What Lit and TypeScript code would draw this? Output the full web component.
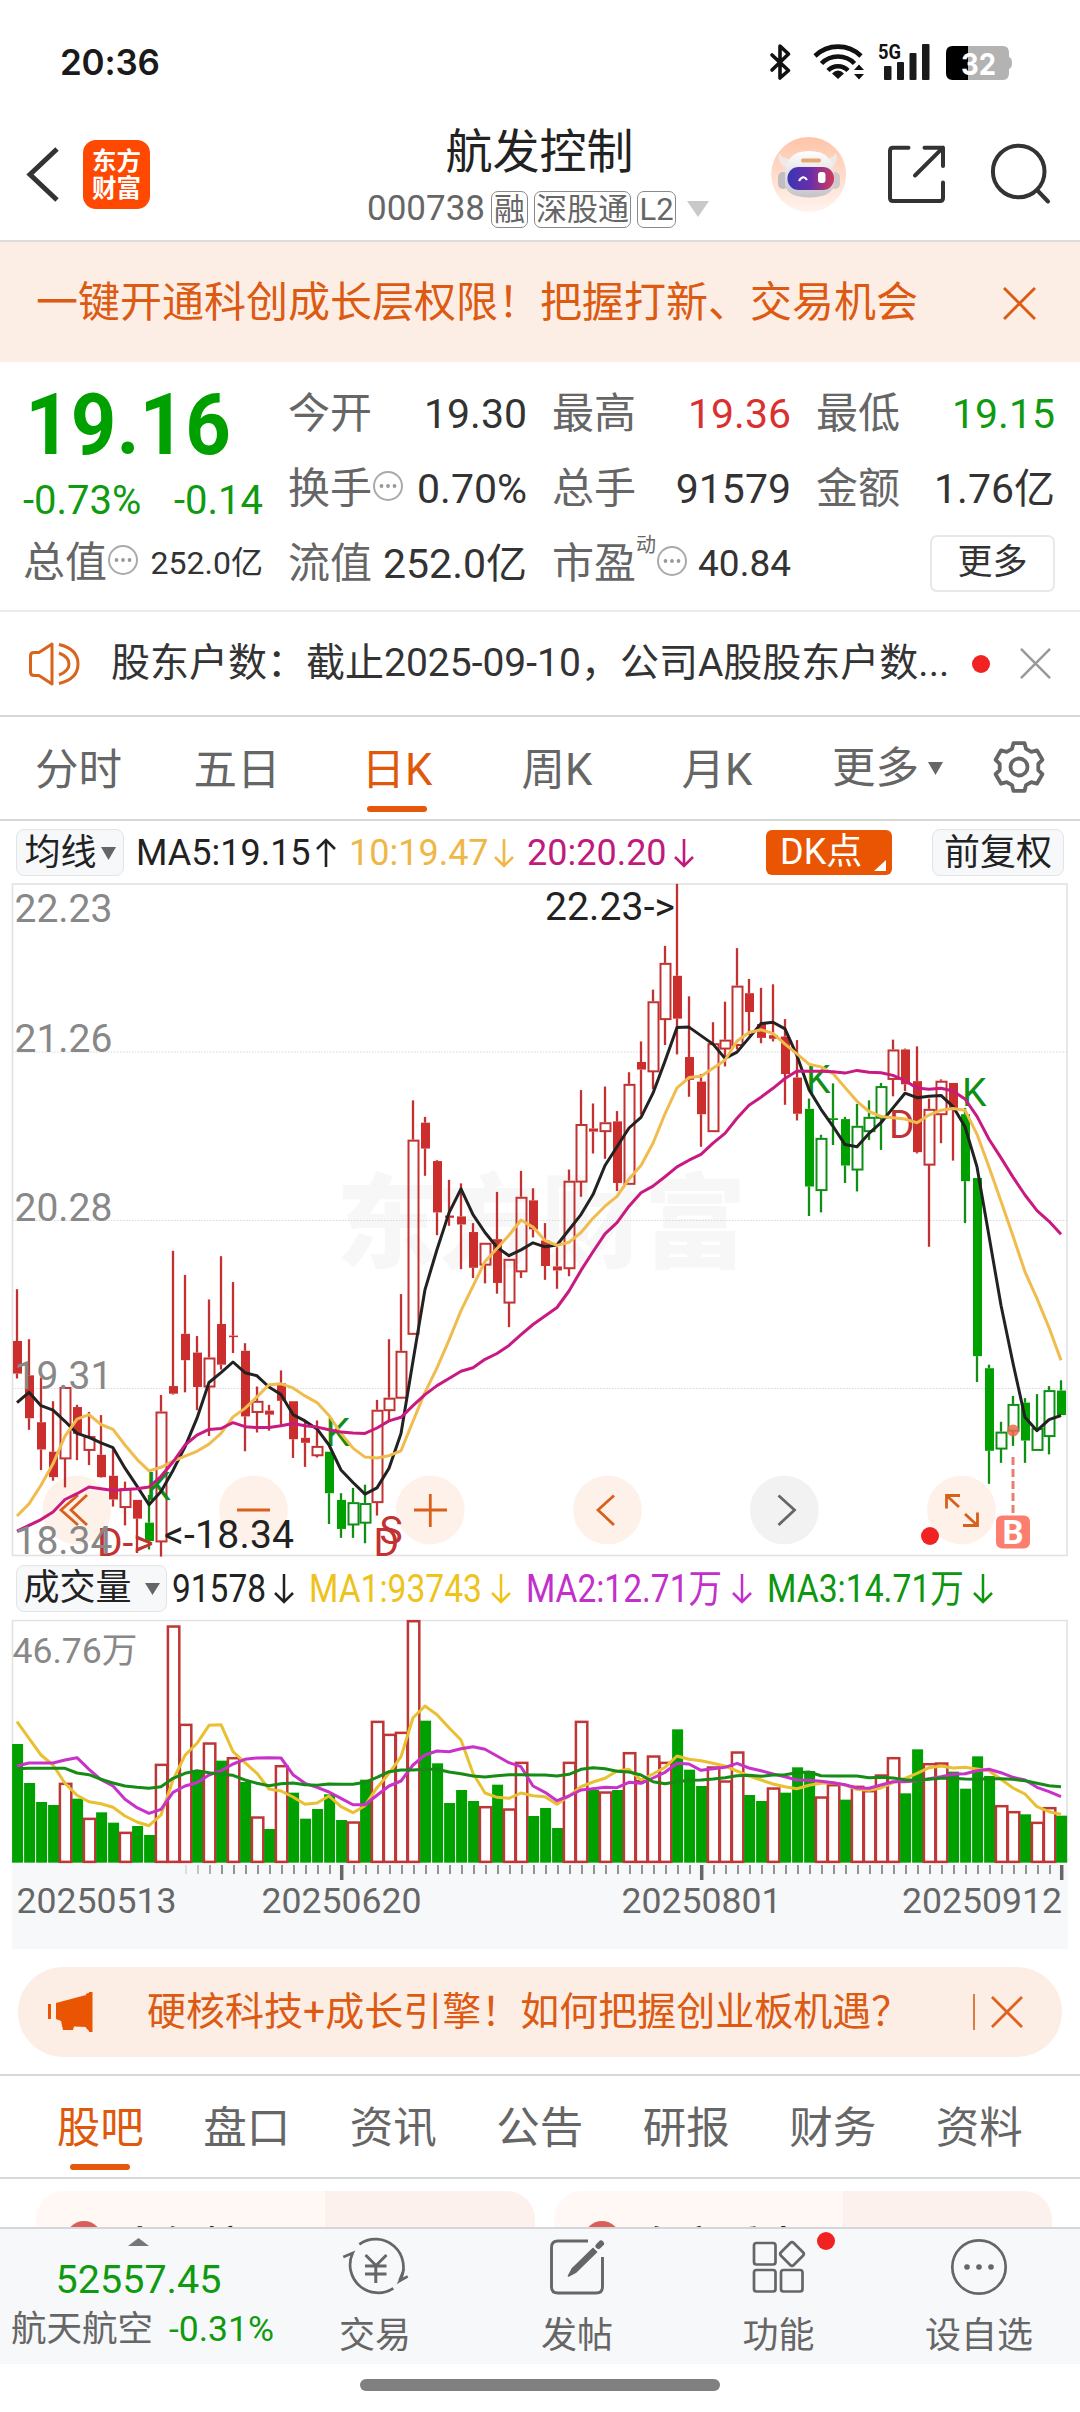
import { LitElement, html, svg, css, nothing } from "lit";
import { customElement } from "lit/decorators.js";

const UP = "#c23232";
const UP_FILL = "#cc2d2d";
const DOWN = "#00a000";
const DOWN_LINE = "#0f8f16";
const STEP = 12;
const FIRST_X = 17;

/* kind, body top, body bottom, high, low */
type Candle = [string, number, number, number, number];
const candles: Candle[] = [
  ["R", 1055, 1128, 939, 1139], ["R", 1132, 1228, 1051, 1254], ["R", 1237, 1298, 1137, 1344], ["R", 1303, 1360, 1190, 1368],
  ["r", 1158, 1318, 1158, 1383], ["R", 1203, 1263, 1198, 1322], ["r", 1268, 1299, 1214, 1333], ["R", 1310, 1360, 1221, 1361],
  ["R", 1357, 1410, 1298, 1426], ["r", 1385, 1427, 1370, 1468], ["R", 1411, 1453, 1411, 1530], ["G", 1462, 1503, 1400, 1522],
  ["r", 1213, 1504, 1176, 1538], ["R", 1156, 1173, 853, 1175], ["R", 1039, 1098, 907, 1170], ["R", 1081, 1158, 1044, 1210],
  ["r", 1092, 1157, 962, 1268], ["R", 1017, 1108, 865, 1119], ["R", 1043, 1046, 923, 1082], ["R", 1077, 1224, 1060, 1302],
  ["r", 1189, 1214, 1157, 1260], ["R", 1211, 1220, 1198, 1256], ["R", 1150, 1189, 1121, 1243], ["R", 1190, 1275, 1190, 1317],
  ["R", 1272, 1283, 1236, 1337], ["r", 1290, 1311, 1233, 1316], ["G", 1303, 1396, 1303, 1465], ["G", 1411, 1476, 1396, 1496],
  ["g", 1416, 1466, 1384, 1496], ["g", 1418, 1462, 1377, 1508], ["r", 1209, 1416, 1187, 1446], ["r", 1182, 1210, 1051, 1232],
  ["r", 1077, 1182, 950, 1182], ["r", 604, 1039, 516, 1039], ["R", 566, 624, 553, 685], ["R", 652, 767, 650, 818],
  ["R", 774, 779, 694, 797], ["R", 776, 794, 702, 894], ["R", 811, 891, 791, 914], ["r", 835, 884, 835, 926],
  ["R", 827, 925, 721, 949], ["r", 871, 969, 871, 1024], ["r", 732, 899, 674, 914], ["R", 740, 805, 713, 823],
  ["R", 830, 887, 791, 918], ["R", 888, 897, 845, 938], ["r", 696, 892, 671, 910], ["r", 569, 698, 493, 732],
  ["R", 579, 586, 523, 635], ["r", 565, 585, 485, 647], ["R", 563, 701, 540, 719], ["r", 479, 703, 453, 703],
  ["R", 430, 447, 384, 548], ["r", 294, 451, 268, 491], ["r", 208, 334, 170, 392], ["R", 237, 333, 31, 413],
  ["R", 419, 470, 283, 508], ["R", 474, 547, 457, 620], ["r", 388, 585, 341, 585], ["r", 380, 400, 295, 440],
  ["r", 259, 392, 175, 402], ["R", 276, 318, 244, 370], ["R", 345, 376, 264, 388], ["R", 370, 378, 256, 384],
  ["R", 373, 457, 334, 526], ["R", 465, 546, 381, 561], ["G", 535, 709, 512, 775], ["g", 600, 717, 593, 767],
  ["G", 556, 560, 478, 616], ["G", 558, 662, 553, 701], ["g", 573, 671, 524, 720], ["g", 553, 585, 516, 605],
  ["g", 484, 555, 477, 627], ["r", 402, 468, 380, 507], ["R", 402, 480, 400, 495], ["R", 473, 632, 395, 635],
  ["r", 535, 660, 512, 844], ["r", 472, 547, 469, 612], ["R", 477, 535, 477, 651], ["G", 547, 697, 533, 791],
  ["G", 690, 1089, 690, 1147], ["G", 1116, 1301, 1108, 1375], ["g", 1258, 1296, 1236, 1328], ["g", 1196, 1256, 1178, 1290],
  ["G", 1193, 1278, 1183, 1328], ["g", 1250, 1299, 1174, 1299], ["g", 1165, 1268, 1156, 1309], ["G", 1166, 1221, 1143, 1221],
];

const ma5 = [1193, 1170, 1200, 1210, 1235, 1262, 1271, 1283, 1294, 1340, 1380, 1422, 1392, 1345, 1292, 1228, 1148, 1126, 1102, 1126, 1133, 1158, 1175, 1220, 1234, 1252, 1288, 1344, 1372, 1398, 1384, 1340, 1262, 1100, 940, 850, 768, 714, 772, 812, 845, 864, 851, 835, 844, 840, 806, 772, 727, 662, 620, 578, 554, 500, 428, 353, 352, 371, 390, 422, 408, 376, 344, 341, 356, 416, 492, 536, 574, 615, 620, 590, 566, 533, 500, 510, 507, 505, 530, 575, 665, 820, 975, 1105, 1226, 1256, 1231, 1222];
const ma10 = [1447, 1420, 1378, 1330, 1268, 1230, 1220, 1242, 1253, 1288, 1320, 1346, 1338, 1324, 1313, 1302, 1286, 1262, 1225, 1206, 1180, 1153, 1151, 1160, 1178, 1193, 1222, 1262, 1295, 1315, 1317, 1312, 1301, 1235, 1170, 1115, 1053, 987, 932, 877, 848, 818, 784, 800, 830, 841, 834, 812, 780, 753, 731, 692, 662, 612, 546, 488, 465, 462, 444, 426, 383, 364, 358, 366, 390, 412, 435, 441, 456, 487, 518, 541, 552, 555, 558, 566, 549, 538, 534, 538, 592, 665, 742, 820, 900, 960, 1025, 1098];
const ma20 = [1481, 1468, 1455, 1438, 1410, 1397, 1382, 1386, 1390, 1388, 1386, 1382, 1358, 1326, 1288, 1266, 1253, 1251, 1238, 1247, 1249, 1249, 1245, 1240, 1245, 1248, 1254, 1259, 1261, 1262, 1250, 1234, 1226, 1200, 1175, 1155, 1139, 1123, 1115, 1096, 1083, 1065, 1041, 1018, 999, 980, 943, 897, 855, 815, 790, 753, 723, 708, 687, 665, 650, 637, 612, 590, 556, 527, 509, 489, 467, 450, 451, 451, 452, 455, 449, 453, 454, 460, 472, 488, 491, 489, 495, 513, 552, 603, 645, 688, 728, 763, 787, 816];

const volumes: [string, number][] = (
  "G552 G669 G726 G735 r668 G716 r773 G757 G788 r815 G798 G825 r611 r196 r491 G630 r547 G602 r591 G666 r769 G807 " +
  "r615 G698 G776 G747 G703 G780 r784 G659 r482 r521 r515 r180 G482 G610 G729 G690 G723 r738 G674 r745 r605 G768 " +
  "G744 G804 r605 r482 G690 r694 G690 r576 r660 r586 r605 G508 G629 G678 r619 r661 r574 G705 G723 r682 G698 G622 " +
  "G633 r709 r672 G719 r677 r690 r643 r591 G700 G568 r609 r607 G635 G686 G589 G648 r735 r753 G763 r785 r741 G767"
).split(" ").map((s) => [s[0], Number(s.slice(1))] as [string, number]);

const vma1 = [485, 535, 585, 615, 670, 706, 725, 731, 742, 768, 786, 797, 765, 660, 586, 550, 496, 494, 575, 608, 640, 687, 693, 711, 733, 729, 708, 740, 758, 737, 683, 640, 590, 473, 438, 464, 503, 540, 640, 699, 712, 715, 699, 707, 710, 733, 708, 680, 666, 655, 633, 628, 660, 642, 622, 588, 598, 602, 610, 618, 633, 648, 660, 672, 680, 686, 676, 670, 668, 675, 688, 691, 684, 668, 655, 640, 623, 618, 624, 622, 627, 632, 658, 684, 702, 740, 755, 763];
const vma2 = [618, 609, 609, 609, 600, 593, 628, 659, 678, 718, 743, 760, 748, 697, 678, 668, 645, 632, 612, 598, 594, 593, 594, 644, 670, 682, 696, 715, 734, 734, 706, 678, 663, 615, 585, 573, 575, 566, 560, 568, 588, 608, 620, 678, 697, 722, 708, 690, 686, 682, 683, 667, 670, 654, 637, 610, 612, 631, 626, 622, 610, 624, 632, 642, 650, 660, 661, 664, 668, 674, 684, 685, 675, 665, 665, 662, 656, 650, 643, 641, 632, 628, 638, 652, 660, 682, 695, 710];
const vma3 = [626, 625, 625, 625, 625, 639, 644, 658, 669, 678, 682, 685, 680, 655, 640, 632, 638, 643, 646, 660, 670, 677, 671, 669, 674, 676, 672, 673, 673, 667, 652, 635, 630, 630, 628, 628, 636, 641, 648, 651, 647, 644, 644, 645, 645, 648, 643, 628, 623, 626, 634, 636, 645, 665, 671, 665, 661, 660, 657, 653, 647, 646, 649, 645, 644, 638, 636, 647, 648, 648, 648, 653, 652, 654, 659, 661, 658, 655, 655, 657, 658, 656, 656, 658, 662, 670, 677, 680];

const xAt = (i: number) => FIRST_X + i * STEP;
const priceY = (v: number) => 870 + v / 2.24;
const volY = (v: number) => 1560 + v / 3;
const points = (list: number[], y: (v: number) => number) =>
  list.map((v, i) => `${xAt(i)},${y(v).toFixed(1)}`).join(" ");

@customElement("candle-chart")
class CandleChart extends LitElement {
  static styles = css`
    :host { display: block; }
    svg { display: block; }
    .t { font: 39px Roboto, sans-serif; }
    .axis { fill: #888; }
    .mark { font: 900 102px "Noto Sans CJK SC", sans-serif; fill: #f7f7f7; }
    .line { fill: none; stroke-width: 3; stroke-linejoin: round; }
  `;

  private candle([kind, top, bottom, high, low]: Candle, i: number) {
    const x = xAt(i);
    const red = kind.toLowerCase() === "r";
    const line = red ? UP : DOWN_LINE;
    const t = priceY(top), b = priceY(bottom), h = priceY(high), l = priceY(low);
    const filled = kind === "R" || kind === "G";
    return svg`
      ${h < t ? svg`<path d="M${x} ${h}V${t}" stroke=${line} stroke-width="2.3"/>` : nothing}
      ${l > b ? svg`<path d="M${x} ${b}V${l}" stroke=${line} stroke-width="2.3"/>` : nothing}
      ${filled
        ? svg`<rect x=${x - 4} y=${t} width="9" height=${Math.max(b - t, 1.5)} fill=${red ? UP_FILL : DOWN}/>`
        : svg`<rect x=${x - 4.5} y=${t + 1} width="10" height=${Math.max(b - t - 1, 1)} fill="none" stroke=${line} stroke-width="2"/>`}`;
  }

  render() {
    return html`<svg width="1080" height="674" viewBox="0 883 1080 674">
      <text class="mark" x="336" y="1260" textLength="410">东方财富</text>
      ${[1052, 1220.5, 1388.5].map((y) => svg`<path d="M12 ${y}H1067" stroke="#d8d8d8" stroke-dasharray="1.5 1.5"/>`)}
      <rect x="12.5" y="884" width="1054.5" height="671.5" fill="none" stroke="#e2e2e4" stroke-width="1.6"/>
      <g fill="#fef1ea">
        ${[76.7, 253.5, 430.3, 607.5, 961.5].map((x) => svg`<circle cx=${x} cy="1510" r="34.4"/>`)}
        <circle cx="784.3" cy="1510" r="34.4" fill="#f2f2f2"/>
      </g>
      <g fill="none" stroke="#d9601a" stroke-width="2.8">
        <path d="M78 1495L61 1510L78 1525M87 1495L71 1510L87 1525"/>
        <path d="M237 1510H270M414 1510H447M430.3 1494V1527"/>
        <path d="M614 1495.500L598 1510L614 1525"/>
        <path d="M778.500 1495.500L794.500 1510L778.500 1525" stroke="#666"/>
        <path d="M960 1495.500H946.500V1508.500M946.500 1495.500L959 1507M963 1525.500H977.500V1512.500M977.500 1525.500L965 1514"/>
      </g>
      ${candles.map((c, i) => this.candle(c, i))}
      <g class="t">
        <g fill=${DOWN_LINE}>
          <text x="146" y="1499.5">K</text><text x="325.500" y="1446">K</text>
          <text x="806" y="1092.500">K</text><text x="962" y="1105.500">K</text>
        </g>
        <g fill=${UP}>
          <text x="97" y="1555.500">D-&gt;</text><text x="889" y="1138">D</text>
          <text x="379.500" y="1544">S</text><text x="373.500" y="1555.500">D</text>
        </g>
      </g>
      <polyline class="line" stroke="#222" points=${points(ma5, priceY)}/>
      <polyline class="line" stroke="#f0bc4e" points=${points(ma10, priceY)}/>
      <polyline class="line" stroke="#c81a80" points=${points(ma20, priceY)}/>
      <g class="t">
        <text class="axis" x="14.500" y="921.500">22.23</text>
        <text class="axis" x="14.500" y="1052">21.26</text>
        <text class="axis" x="14.500" y="1220.500">20.28</text>
        <text class="axis" x="14.500" y="1389">19.31</text>
        <text class="axis" x="14.500" y="1553.500">18.34</text>
        <text x="545" y="920" fill="#222" textLength="130">22.23-&gt;</text>
        <text x="164" y="1548" fill="#222" textLength="130">&lt;-18.34</text>
      </g>
      <circle cx="1013" cy="1430.500" r="6" fill="#ef6a50" opacity=".85"/>
      <path d="M1013 1457V1515" stroke="#e8806f" stroke-width="3" stroke-dasharray="8 4"/>
      <rect x="996" y="1515.500" width="34" height="33" rx="6" fill="#fb7e6e"/>
      <text x="1013" y="1543.500" text-anchor="middle" font-family="Roboto" font-weight="700" font-size="33" fill="#fff">B</text>
      <circle cx="930" cy="1536" r="9" fill="#f02222"/>
    </svg>`;
  }
}

@customElement("volume-chart")
class VolumeChart extends LitElement {
  static styles = css`
    :host { display: block; }
    svg { display: block; }
    text { font: 35.6px Roboto, "Noto Sans CJK SC", sans-serif; fill: #666; }
    .max { fill: #888; }
    .line { fill: none; stroke-width: 3; stroke-linejoin: round; }
  `;

  render() {
    const base = volY(908);
    const majors = [27, 57, 87];
    return html`<svg width="1080" height="330" viewBox="0 1619 1080 330">
      <rect x="12" y="1863" width="1056" height="86" fill="#f7f8fa"/>
      <path d="M12.500 1863V1620.500H1067V1863" fill="none" stroke="#e2e2e4" stroke-width="1.600"/>
      <text class="max" x="12.500" y="1663">46.76万</text>
      ${volumes.map(([kind, top], i) => {
        const x = xAt(i) + 0.6, y = volY(top);
        return kind === "G"
          ? svg`<rect x=${x - 5.5} y=${y} width="11" height=${base - y} fill=${DOWN}/>`
          : svg`<rect x=${x - 5.7} y=${y + 1.2} width="11.400" height=${base - y - 2} fill="#fff" stroke="#be3636" stroke-width="2.500"/>`;
      })}
      <polyline class="line" stroke="#e8c030" points=${points(vma1, volY)}/>
      <polyline class="line" stroke="#c832c8" points=${points(vma2, volY)}/>
      <polyline class="line" stroke="#168c16" points=${points(vma3, volY)}/>
      ${volumes.map((_, i) => i < 14 ? nothing : majors.includes(i)
        ? svg`<path d="M${xAt(i) + 0.7} 1865V1880" stroke="#666" stroke-width="3.500"/>`
        : svg`<path d="M${xAt(i) + 1} 1865V1874" stroke="#888" stroke-width="1.800" opacity=${Math.min(1, (i - 13) * 0.25)}/>`)}
      <text x="16.500" y="1912.700">20250513</text>
      <text x="261.500" y="1912.700">20250620</text>
      <text x="621.500" y="1912.700">20250801</text>
      <text x="1062" y="1912.700" text-anchor="end">20250912</text>
    </svg>`;
  }
}

const info = html`<svg class="info" width="32" height="32" viewBox="0 0 32 32"><circle cx="16" cy="16" r="14" fill="none" stroke="#aaa" stroke-width="2"/><g fill="#999"><circle cx="9.500" cy="16" r="1.900"/><circle cx="16" cy="16" r="1.900"/><circle cx="22.500" cy="16" r="1.900"/></g></svg>`;
const arrow = (color: string, up = false) => html`<svg width="22" height="34" viewBox="0 0 22 34" fill="none" stroke=${color} stroke-width="2.600">${up
  ? svg`<path d="M11 31V4M2 13L11 4L20 13"/>`
  : svg`<path d="M11 3V30M2 21L11 30L20 21"/>`}</svg>`;
const cross = (color: string, size: number, w: number) => html`<svg width=${size} height=${size} viewBox="0 0 32 32" stroke=${color} stroke-width=${w} fill="none"><path d="M1 1L31 31M31 1L1 31"/></svg>`;
const caret = (w: number, h: number, color: string) => html`<svg width=${w} height=${h} viewBox="0 0 10 10" preserveAspectRatio="none"><path d="M0 0H10L5 10Z" fill=${color}/></svg>`;

@customElement("app-root")
class AppRoot extends LitElement {
  static styles = css`
    :host { display: block; width: 1080px; height: 2412px; overflow: hidden; background: #fff; color: #333;
      font-family: Roboto, "Noto Sans CJK SC", sans-serif; line-height: 1.2; }
    * { box-sizing: border-box; }
    svg { display: block; flex: none; overflow: visible; }
    div, span { white-space: nowrap; }
    .status { height: 124px; padding: 0 58px 0 60px; display: flex; justify-content: space-between; }
    .time { font: 600 35px/124px Inter, sans-serif; color: #1a1a1a; letter-spacing: -.2px; }
    .header { height: 118px; display: grid; grid-template-columns: 367px 345px 1fr; border-bottom: 2px solid #dcdcdc; }
    .brand { display: flex; padding: 16px 0 0 26px; }
    .logo { width: 67px; height: 69px; margin-left: 23px; background: #ff4800; border-radius: 13px; color: #fff;
      font: 700 24.500px/27px "Noto Sans CJK SC"; text-align: center; padding-top: 6px; }
    .title { text-align: center; font-size: 47px; line-height: 56px; color: #222; }
    .sub { display: flex; align-items: center; height: 58px; font-size: 35px; color: #666; }
    .tag { height: 37px; border: 1.500px solid #8a8a8a; border-radius: 7px; font-size: 31px; line-height: 36px; text-align: center; margin-left: 6px; }
    .t1 { width: 37px; } .t3 { width: 97px; } .t2 { width: 39px; }
    .sub svg { margin-left: 11px; }
    .banner { height: 120px; background: #fceee5; display: flex; align-items: center; padding: 2px 44px 0 36px; justify-content: space-between; color: #dc5a12; font-size: 42px; }
    .quote { height: 250px; border-bottom: 2px solid #ebebeb; display: grid; grid-template-columns: 263px 264px 264px 264px; padding-top: 15px; }
    .col { display: flex; flex-direction: column; }
    .cell { height: 75px; display: flex; align-items: center; padding-left: 25px; font-size: 41px; }
    .col:first-child .cell { padding-left: 23px; }
    .cell .k { font-size: 42px; color: #666; }
    .cell .v { margin-left: auto; }
    .info { margin-bottom: 8px; }
    .big { height: 99px; font-size: 86px; font-weight: 700; line-height: 96px; padding-left: 25px; color: #00a000; transform: scaleX(.925); transform-origin: 27px 50%; }
    .chg { height: 50px; display: flex; align-items: center; justify-content: space-between; padding-left: 23px; font-size: 40px; color: #0f9a0f; }
    .small { font-size: 32px; } .mid { font-size: 37px; }
    .red { color: #d93030; } .green { color: #0f9a0f; }
    .sup { font-size: 20px; color: #666; align-self: flex-start; margin: 6px 0 0 0; }
    .more { width: 125px; height: 57px; border: 2px solid #e6e8ea; border-radius: 7px; margin-left: auto; font-size: 35px; line-height: 51px; text-align: center; margin-bottom: 3px; }
    .news { height: 105px; border-bottom: 2px solid #d9d9d9; display: flex; align-items: center; padding-left: 28px; font-size: 39px; }
    .news .txt { width: 861px; margin-left: 30px; }
    .dot { width: 18px; height: 18px; border-radius: 50%; background: #f02222; }
    .news .x { margin-left: 30px; }
    .tabs { height: 104px; border-bottom: 2px solid #d9d9d9; display: flex; font-size: 43.500px; color: #666; }
    .tab { width: 160px; line-height: 107px; text-align: center; position: relative; }
    .tab:first-child { width: 157px; }
    .on { color: #e0580c; }
    .on::after { content: ""; position: absolute; left: 50%; margin-left: -30px; width: 60px; height: 6px; border-radius: 3px; background: #e5570a; bottom: 7px; }
    .tabs .wide { display: flex; align-items: center; gap: 9px; padding-left: 35px; width: 194px; }
    .tabs .gear { margin: 23px 0 0 1px; }
    .legend { height: 62px; display: flex; align-items: center; padding: 1px 0 0 16px; font-size: 36px; color: #222; }
    .pick { height: 47px; padding-top: 2px; border: 1.500px solid #e3e4e8; background: #f7f8fa; border-radius: 8px; display: flex; align-items: center; justify-content: center; gap: 4px; color: #222; }
    .ma { width: 108px; } .adj { width: 132px; margin-left: 40px; }
    .legend span { padding-top: 2px; }
    .ma5 { width: 179px; margin-left: 12px; } .ma10 { width: 144px; margin-left: 12px; } .ma20 { width: 146px; margin-left: 12px; }
    .y { color: #eeb748; } .p { color: #bf1a7c; }
    .dk { width: 126px; height: 45px; border-radius: 6px; background: #ea5504; color: #fff; display: flex; align-items: center; padding-left: 14px; margin-left: 71px; }
    .dk svg { margin: 25px 0 0 12px; }
    .vlegend { height: 62px; display: flex; align-items: center; padding: 0 0 0 16px; }
    .vol { width: 151px; font-size: 36px; gap: 13px; }
    .ad { height: 90px; margin: 18px 18px 17px; border-radius: 45px; background: #fceee5; color: #dc5a12; display: flex; align-items: center; padding: 0 39px 0 29px; font-size: 39px; }
    .ad .txt { margin-left: 53px; flex: 1; }
    .ad .bar { width: 2px; height: 36px; background: #dc7a42; margin-right: 16px; }
    .btabs { height: 105px; border-top: 2px solid #d9d9d9; border-bottom: 2px solid #d9d9d9; display: flex; padding-left: 27px; font-size: 43.500px; color: #666; }
    .btabs .tab { width: 146.500px; line-height: 106px; }
    .cards { height: 48px; overflow: hidden; display: flex; gap: 19px; padding: 12px 28px 0 36px; }
    .card { width: 499px; height: 140px; border-radius: 28px; background: linear-gradient(90deg, #fff8f5 0 58%, #fdf1ee 58%); display: flex; align-items: flex-start; padding: 32px 0 0 30px; color: #222; font-size: 42px; font-weight: 500; line-height: 50px; }
    .ball { width: 36px; height: 36px; border-radius: 50%; background: #d9605a; margin: -2px 17px 0 0; }
    .nav { height: 137px; background: #f7f8fa; border-top: 2px solid #d5d6d9; display: grid; grid-template-columns: 274px 202px 202px 201px 200px; color: #666; font-size: 36px; }
    .index { text-align: center; padding-top: 9px; }
    .index svg { margin: 0 auto 10px 128px; transform: rotate(180deg); }
    .idx { font-size: 39.500px; line-height: 47px; color: #0f9a0f; padding-left: 3px; }
    .idn { display: flex; justify-content: space-between; padding-left: 11px; font-size: 35.500px; line-height: 53px; }
    .item { display: flex; flex-direction: column; align-items: center; padding-top: 8px; position: relative; }
    .item span { line-height: 44px; margin-top: 17px; }
    .badge { position: absolute; left: 139px; top: 3px; }
    .home { width: 360px; height: 12px; border-radius: 6px; background: #808080; margin: 14.500px auto 0; }
  `;

  private status() {
    return html`<div class="status"><div class="time">20:36</div>
      <svg width="258" height="124" viewBox="764 0 258 124">
        <g fill="none" stroke="#111" stroke-width="3.600" stroke-linejoin="round" stroke-linecap="round">
          <path d="M772 55L788.500 70.500L780 78V46L788.500 54L772 70"/>
          <g stroke-width="4.600" stroke-linecap="butt"><path d="M815 56A33 33 0 0 1 861 56"/><path d="M821.500 63.500A23 23 0 0 1 854.500 63.500"/><path d="M828 70.500A14 14 0 0 1 848 70.500"/></g>
        </g>
        <path d="M838 79L832 73.500Q838 67.500 844 73.500Z" fill="#111"/>
        <path d="M859 64.500L864 70H854ZM859 79.500L854 74H864Z" fill="#111"/>
        <text x="878" y="58.500" font-family="Roboto" font-weight="700" font-size="21" textLength="23" lengthAdjust="spacingAndGlyphs" fill="#111">5G</text>
        <g fill="#1a1a1a"><rect x="884" y="66" width="7.500" height="14" rx="1"/><rect x="897" y="62" width="7" height="18" rx="1"/><rect x="909.500" y="53" width="7" height="27" rx="1"/><rect x="922" y="44" width="7.500" height="36" rx="1"/></g>
        <path d="M968 46H1003Q1009 46 1009 53V57Q1012 58 1012 63Q1012 68 1009 69V73Q1009 80 1003 80H968Z" fill="#b3b3b3"/>
        <path d="M968 46H952.500Q946 46 946 53V73Q946 80 952.500 80H968Z" fill="#000"/>
        <text x="978.500" y="74.500" text-anchor="middle" font-family="Inter" font-weight="700" font-size="30" textLength="35" lengthAdjust="spacingAndGlyphs" fill="#fff">32</text>
      </svg></div>`;
  }

  private header() {
    return html`<div class="header">
      <div class="brand">
        <svg width="34" height="69" viewBox="26 140 34 69"><path d="M57 149L30 174.500L57 200" fill="none" stroke="#333" stroke-width="5"/></svg>
        <div class="logo">东方<br />财富</div>
      </div>
      <div><div class="title">航发控制</div>
        <div class="sub"><span>000738</span><span class="tag t1">融</span><span class="tag t3">深股通</span><span class="tag t2">L2</span>${caret(22, 16, "#c9c9c9")}</div></div>
      <svg width="368" height="116" viewBox="712 124 368 116">
        <defs>
          <linearGradient id="halo" x2="0" y2="1"><stop stop-color="#ffc4a8"/><stop offset="1" stop-color="#fff4ee"/></linearGradient>
          <linearGradient id="visor"><stop stop-color="#3b35b5"/><stop offset=".5" stop-color="#6a2fa8"/><stop offset="1" stop-color="#d23a5c"/></linearGradient>
          <linearGradient id="helmet" x2="0" y2="1"><stop stop-color="#fff"/><stop offset="1" stop-color="#c6c3c8"/></linearGradient>
        </defs>
        <circle cx="808.700" cy="174.500" r="37.500" fill="url(#halo)"/>
        <path d="M779 153Q776 162 786 168L793 159Q783 160 779 153ZM836 153Q839 162 831 168L823 159Q832 160 836 153Z" fill="#f1e9e8"/>
        <rect x="778" y="172" width="10" height="17" rx="5" fill="#c2bdc0"/><rect x="830" y="172" width="10" height="17" rx="5" fill="#d0c9cb"/>
        <path d="M785 176Q785 151 809 151Q834 151 834 176V185Q832 197 809 197.500Q787 197 785 185Z" fill="url(#helmet)"/>
        <rect x="787.500" y="167" width="46.500" height="23" rx="11" fill="url(#visor)"/>
        <rect x="801" y="158.500" width="20" height="4" rx="2" fill="#e8a870"/>
        <path d="M799 181Q803 174 807 180" fill="none" stroke="#fff" stroke-width="2.200"/>
        <rect x="818" y="172" width="7.500" height="11" rx="3" fill="#fff"/>
        <g fill="none" stroke="#333" stroke-width="4" stroke-linecap="round" stroke-linejoin="round">
          <path d="M908.500 147.700H893Q890 147.700 890 151V198Q890 201 893 201H940Q943 201 943 198V182.500"/>
          <path d="M924.500 147.700H943V166M943 147.700L915 175.500"/>
          <circle cx="1018.700" cy="171.500" r="25.800"/><path d="M1037.500 190.500L1048 201.500"/>
        </g>
      </svg></div>`;
  }

  private quote() {
    const cell = (k: unknown, v: string, cls = "") => html`<div class="cell"><span class="k">${k}</span><span class="v ${cls}">${v}</span></div>`;
    return html`<div class="quote">
      <div class="col"><div class="big">19.16</div><div class="chg"><span>-0.73%</span><span>-0.14</span></div>
        <div class="cell">
          <span class="k">总值</span>${info}<span class="v small">252.0亿</span></div></div>
      <div class="col">${cell("今开", "19.30")}
        <div class="cell"><span class="k">换手</span>${info}<span class="v">0.70%</span></div>${cell("流值", "252.0亿")}</div>
      <div class="col">${cell("最高", "19.36", "red")}${cell("总手", "91579")}
        <div class="cell"><span class="k">市盈</span><span class="sup">动</span>${info}<span class="v mid">40.84</span></div></div>
      <div class="col">${cell("最低", "19.15", "green")}${cell("金额", "1.76亿")}
        <div class="cell"><div class="more">更多</div></div></div>
    </div>`;
  }

  private gear() {
    const pts: string[] = [];
    for (let k = 0; k < 6; k++) {
      const a = (k * 60 - 90) * Math.PI / 180;
      for (const [d, r] of [[-13, 24.5], [13, 24.5], [21, 19.5], [39, 19.5]]) {
        const t = a + d * Math.PI / 180;
        pts.push(`${(27 + r * Math.cos(t)).toFixed(1)},${(27 + r * Math.sin(t)).toFixed(1)}`);
      }
    }
    return html`<svg class="gear" width="54" height="54" viewBox="0 0 54 54" fill="none" stroke="#666" stroke-width="3.800" stroke-linejoin="round"><polygon points=${pts.join(" ")}/><circle cx="27" cy="27" r="8.500"/></svg>`;
  }

  private volLegend() {
    const item = (x: number, w: number, ax: number, color: string, text: string) => svg`
      <text x=${x} y="38" font-size="38.500" fill=${color} textLength=${w} lengthAdjust="spacingAndGlyphs">${text}</text>
      <path d="M${ax} 10V38M${ax - 9} 29L${ax} 38L${ax + 9} 29" fill="none" stroke=${color} stroke-width="2.500"/>`;
    return html`<div class="vlegend"><div class="pick vol">成交量${caret(15, 12, "#666")}</div>
      <svg width="913" height="62" viewBox="167 -7 913 62">
        ${item(172, 94, 284, "#222", "91578")}${item(309, 173, 501, "#edc31c", "MA1:93743")}
        ${item(526, 196, 742, "#c32fcb", "MA2:12.71万")}${item(767, 197, 983, "#0f960f", "MA3:14.71万")}
      </svg></div>`;
  }

  private nav() {
    return html`<div class="nav">
      <div class="index">${caret(21, 8, "#777")}<div class="idx">52557.45</div>
        <div class="idn"><span>航天航空</span><span class="green">-0.31%</span></div></div>
      <div class="item"><svg width="70" height="60" viewBox="0 0 70 60" fill="none" stroke="#666" stroke-width="2.700">
        <path d="M19.300 7.300A28 28 0 0 1 60 43.700L67.700 39.300M59.500 43.700L64 32"/><path d="M53.300 51.300A28 28 0 0 1 12.700 16L3.300 20"/>
        <path d="M25.500 18L36 28.500L46.500 18M25 29H46.500M25 37H46.500M35.800 28V46" stroke-width="3"/></svg><span>交易</span></div>
      <div class="item"><svg width="60" height="60" viewBox="0 0 60 60" fill="none" stroke="#666" stroke-width="2.900">
        <path d="M41 4H11Q4.500 4 4.500 10.500V50Q4.500 56 11 56H49Q55.500 56 55.500 50V20"/>
        <path d="M21.500 39L25.500 31.500L46 11.500L49.500 15L29 35Z" fill="#666" stroke-width="1.600" stroke-linejoin="round"/><path d="M51.500 9L54 6.500" stroke-width="6" stroke-linecap="round"/></svg><span>发帖</span></div>
      <div class="item"><svg width="60" height="60" viewBox="0 0 60 60" fill="none" stroke="#666" stroke-width="2.700" stroke-linejoin="round">
        <rect x="5" y="6" width="21.500" height="21.500" rx="2.500"/><rect x="5" y="33" width="21.500" height="21.500" rx="2.500"/><rect x="32" y="33" width="21.500" height="21.500" rx="2.500"/>
        <rect x="-9" y="-9" width="18" height="18" rx="2.500" transform="translate(43 17) rotate(45)"/></svg><span>功能</span><i class="dot badge"></i></div>
      <div class="item"><svg width="60" height="60" viewBox="0 0 60 60"><circle cx="30" cy="30" r="26.700" fill="none" stroke="#666" stroke-width="2.700"/><g fill="#666"><circle cx="18" cy="30" r="2.800"/><circle cx="30" cy="30" r="2.800"/><circle cx="42" cy="30" r="2.800"/></g></svg><span>设自选</span></div>
    </div>`;
  }

  render() {
    return html`
      ${this.status()}${this.header()}
      <div class="banner"><span>一键开通科创成长层权限！把握打新、交易机会</span>${cross("#dc5a12", 33, 2.8)}</div>
      ${this.quote()}
      <div class="news">
        <svg width="53" height="46" viewBox="0 0 53 46" fill="none" stroke="#d8641e" stroke-width="3" stroke-linejoin="round"><path d="M24 3V43L11 34.500H6Q2.500 34.500 2.500 31V15Q2.500 11.500 6 11.500H11Z"/><path d="M31 12Q41 16 41 23Q41 30 31 34M31 3.500Q50 8 50 23Q50 38 31 42.500"/></svg>
        <span class="txt">股东户数：截止2025-09-10，公司A股股东户数...</span><i class="dot"></i><span class="x">${cross("#999", 31, 2.6)}</span>
      </div>
      <div class="tabs">
        <div class="tab">分时</div><div class="tab">五日</div><div class="tab on">日K</div><div class="tab">周K</div><div class="tab">月K</div>
        <div class="tab wide">更多${caret(15, 13, "#666")}</div>${this.gear()}
      </div>
      <div class="legend">
        <div class="pick ma">均线${caret(15, 13, "#666")}</div>
        <span class="ma5">MA5:19.15</span>${arrow("#222", true)}
        <span class="ma10 y">10:19.47</span>${arrow("#eeb748")}
        <span class="ma20 p">20:20.20</span>${arrow("#bf1a7c")}
        <div class="dk">DK点<svg width="12" height="11" viewBox="0 0 12 11"><path d="M12 0V11H0Z" fill="#fff"/></svg></div>
        <div class="pick adj">前复权</div>
      </div>
      <candle-chart></candle-chart>
      ${this.volLegend()}
      <volume-chart></volume-chart>
      <div class="ad">
        <svg width="47" height="42" viewBox="0 0 47 42" fill="#ea5504"><path d="M1 13H4V28H1ZM9 12L39 4V36L27 35.500L26 39H16L14 30L9 28ZM42 1H45.500V41H42ZM39 3L43 1V41L39 37Z"/></svg>
        <span class="txt">硬核科技+成长引擎！如何把握创业板机遇？</span><i class="bar"></i>${cross("#e06020", 32, 2.8)}
      </div>
      <div class="btabs">${["股吧", "盘口", "资讯", "公告", "研报", "财务", "资料"].map((t, i) => html`<div class="tab ${i === 0 ? "on" : ""}">${t}</div>`)}</div>
      <div class="cards"><div class="card"><i class="ball"></i>人气榜</div><div class="card"><i class="ball"></i>多空看点</div></div>
      ${this.nav()}
      <div class="home"></div>`;
  }
}
